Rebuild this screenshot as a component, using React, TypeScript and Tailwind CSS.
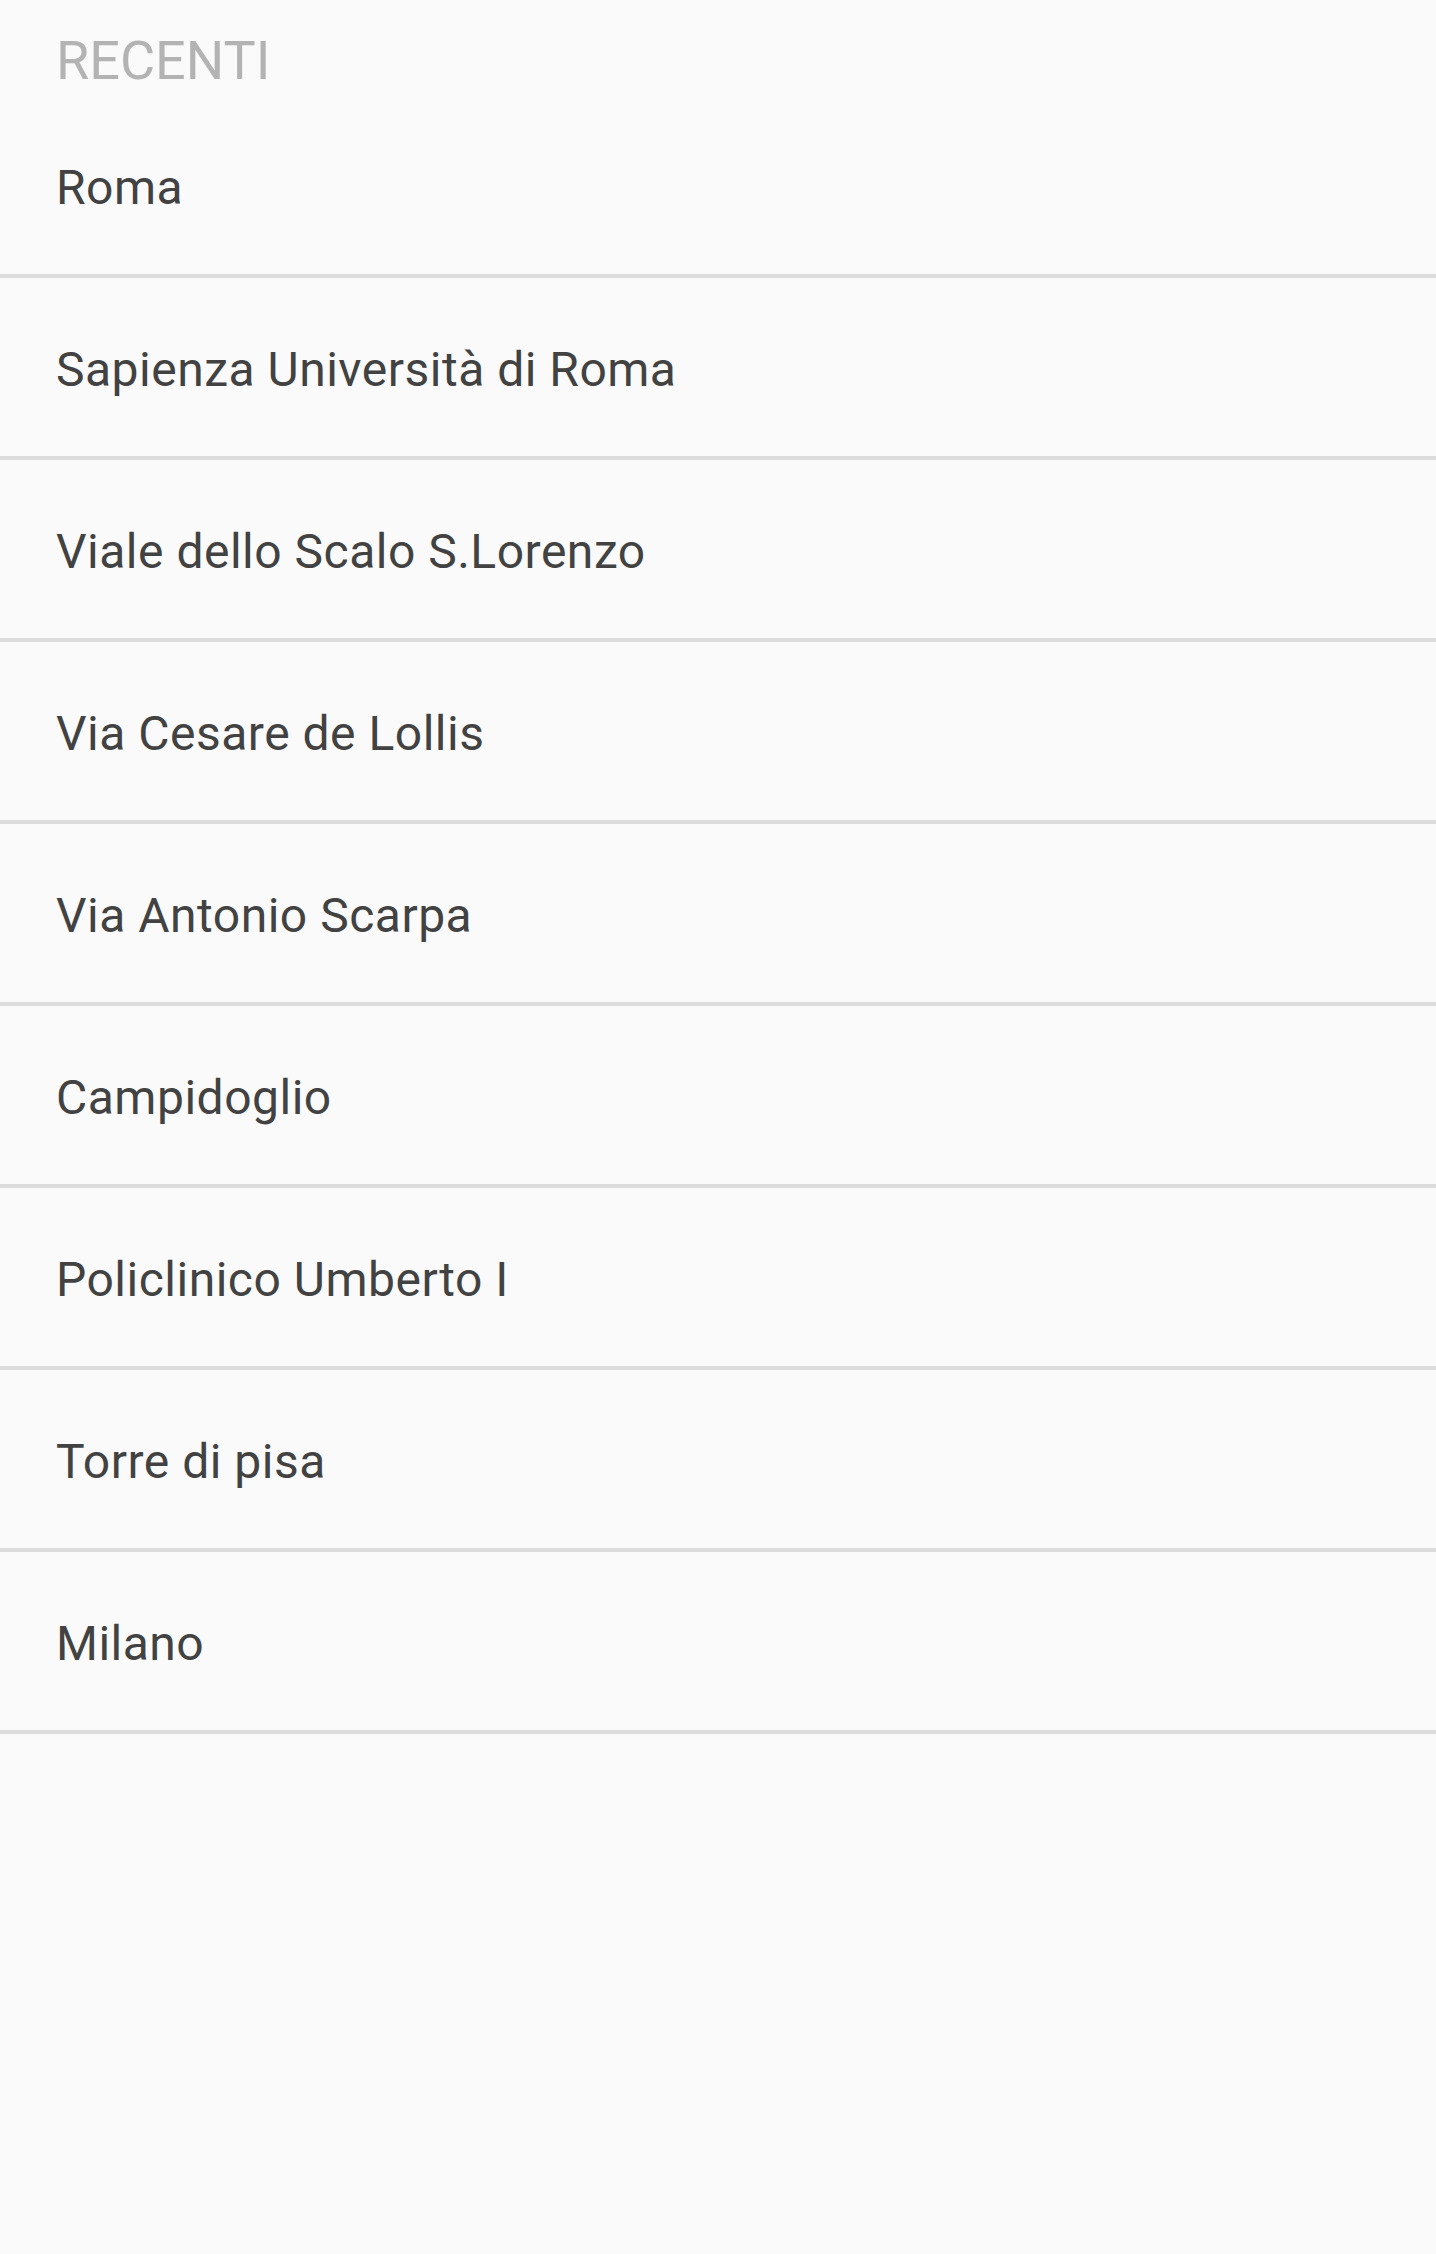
import React from "react";

const items = [
  "Roma",
  "Sapienza Università di Roma",
  "Viale dello Scalo S.Lorenzo",
  "Via Cesare de Lollis",
  "Via Antonio Scarpa",
  "Campidoglio",
  "Policlinico Umberto I",
  "Torre di pisa",
  "Milano",
];

export default function App() {
  return (
    <div
      className="min-h-[2254px] w-full bg-[#fafafa]"
      style={{ fontFamily: "Roboto, 'Noto Sans', sans-serif" }}
    >
      <div className="h-[96px] pl-[56px] pt-[29px]">
        <div className="text-[54px] leading-[63px] text-[#b3b3b3]">RECENTI</div>
      </div>
      {items.map((t) => (
        <div key={t} className="border-b-4 border-[#dcdcdc]">
          <div className="h-[178px] pl-[56px] pt-[64px]">
            <div className="text-[48px] leading-[56px] tracking-[0.5px] text-[#424242]">{t}</div>
          </div>
        </div>
      ))}
    </div>
  );
}
